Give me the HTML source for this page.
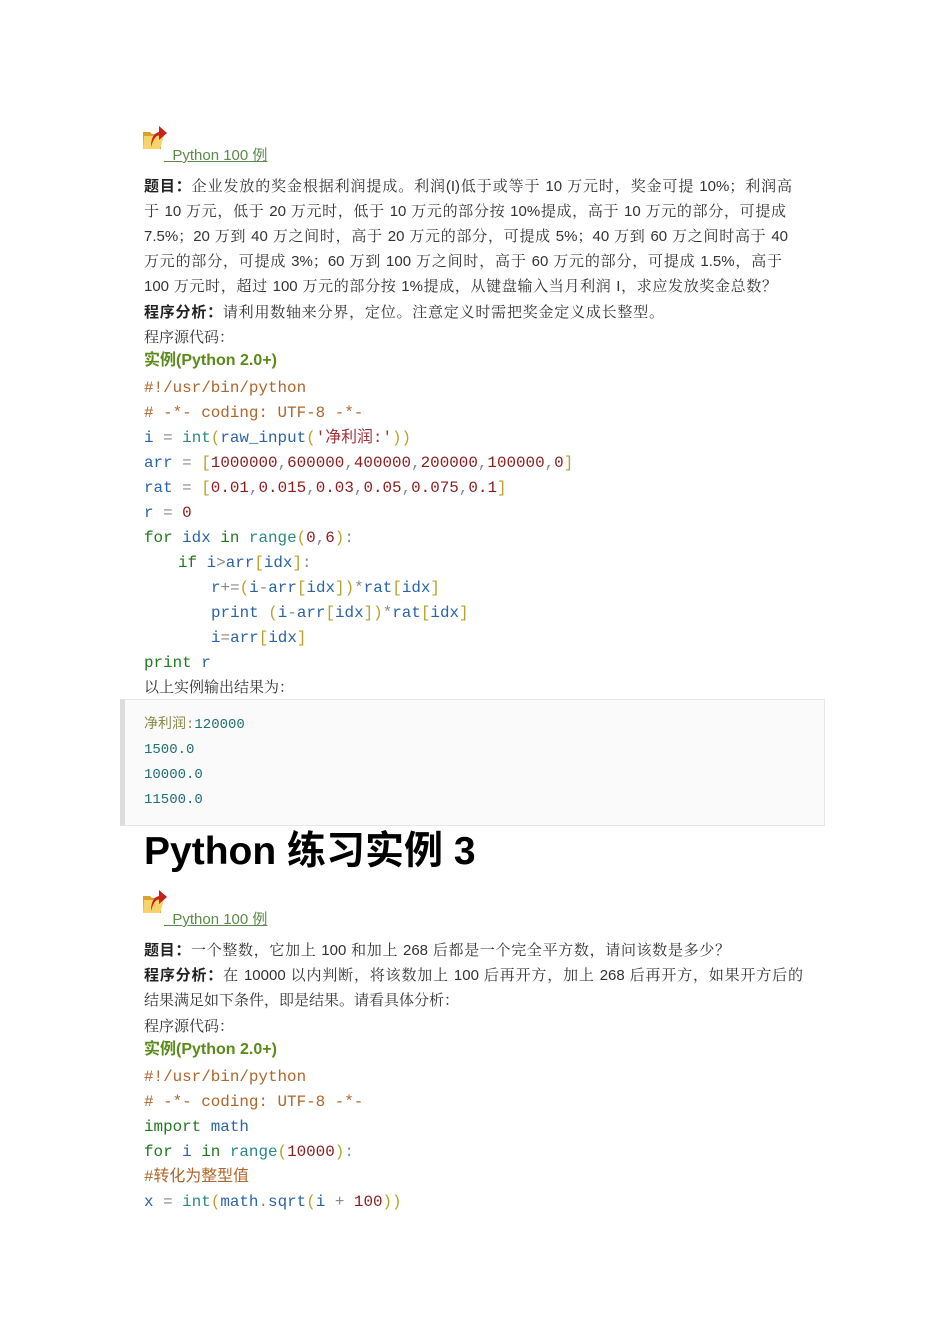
<!DOCTYPE html>
<html><head><meta charset="utf-8"><style>
body{margin:0;width:950px;height:1344px;background:#fff;position:relative;overflow:hidden}
.l{position:absolute;left:144px;white-space:pre;line-height:20px;height:20px}
.t{font-family:"Liberation Sans","Noto Serif CJK SC",serif;font-size:15px;color:#333;margin-top:2px}
.j{white-space:nowrap;text-align:justify;text-align-last:justify;text-justify:inter-character}
.t b{font-family:"Liberation Sans","Noto Sans CJK SC",sans-serif;font-weight:bold;color:#222}
.c{font-family:"Liberation Mono","Noto Sans CJK SC",monospace;font-size:15.9px;color:#2b63a8;margin-top:1px}
.k{color:#1f7a1f}.bi{color:#2a8a80}.br{color:#b8a22a}.n{color:#8b1c1c}.cm{color:#b0652a}.o{color:#888}.s{color:#a0303a}
.h{font-family:"Liberation Sans","Noto Sans CJK SC",sans-serif;font-weight:bold;color:#5a8a1a;font-size:16px;margin-top:1px}
.lk{position:absolute;left:164px;font-family:"Liberation Sans","Noto Sans CJK SC",sans-serif;font-size:15px;color:#5b8a4a;text-decoration:underline;white-space:pre;line-height:20px;margin-top:1px}
.out{font-family:"Liberation Mono","Noto Sans CJK SC",monospace;font-size:14px;color:#1f6f73;margin-top:1px}
</style></head><body>
<svg style="position:absolute;left:142px;top:122px" width="26" height="30" viewBox="0 0 26 30"><path d="M1 10h7l2 2h9v15H1z" fill="#d9a22a"/><path d="M2 14h20l-4 13H1z" fill="#f7d36a"/><path d="M9 25c0-9 3-14 8-15V4l8 7-8 7v-5c-4 1-6 5-8 12z" fill="#c8201a"/></svg>
<div class="lk" style="top:145px">  Python 100 例</div>
<div class="l t j" style="top:175px;width:648px"><b>题目：</b>企业发放的奖金根据利润提成。利润(I)低于或等于 10 万元时，奖金可提 10%；利润高</div>
<div class="l t j" style="top:200px;width:642px">于 10 万元，低于 20 万元时，低于 10 万元的部分按 10%提成，高于 10 万元的部分，可提成</div>
<div class="l t j" style="top:225px;width:644px">7.5%；20 万到 40 万之间时，高于 20 万元的部分，可提成 5%；40 万到 60 万之间时高于 40</div>
<div class="l t j" style="top:250px;width:638px">万元的部分，可提成 3%；60 万到 100 万之间时，高于 60 万元的部分，可提成 1.5%，高于</div>
<div class="l t j" style="top:275px;width:633px">100 万元时，超过 100 万元的部分按 1%提成，从键盘输入当月利润 I，求应发放奖金总数？</div>
<div class="l t j" style="top:301px;width:520px"><b>程序分析：</b>请利用数轴来分界，定位。注意定义时需把奖金定义成长整型。</div>
<div class="l t" style="top:326px">程序源代码：</div>
<div class="l h" style="top:350px">实例(Python 2.0+)</div>
<div class="l c" style="top:377px"><span class="cm">#!/usr/bin/python</span></div>
<div class="l c" style="top:402px"><span class="cm"># -*- coding: UTF-8 -*-</span></div>
<div class="l c" style="top:427px">i <span class="o">=</span> <span class="bi">int</span><span class="br">(</span>raw_input<span class="br">(</span><span class="s">'净利润:'</span><span class="br">))</span></div>
<div class="l c" style="top:452px">arr <span class="o">=</span> <span class="br">[</span><span class="n">1000000</span><span class="o">,</span><span class="n">600000</span><span class="o">,</span><span class="n">400000</span><span class="o">,</span><span class="n">200000</span><span class="o">,</span><span class="n">100000</span><span class="o">,</span><span class="n">0</span><span class="br">]</span></div>
<div class="l c" style="top:477px">rat <span class="o">=</span> <span class="br">[</span><span class="n">0.01</span><span class="o">,</span><span class="n">0.015</span><span class="o">,</span><span class="n">0.03</span><span class="o">,</span><span class="n">0.05</span><span class="o">,</span><span class="n">0.075</span><span class="o">,</span><span class="n">0.1</span><span class="br">]</span></div>
<div class="l c" style="top:502px">r <span class="o">=</span> <span class="n">0</span></div>
<div class="l c" style="top:527px"><span class="k">for</span> idx <span class="k">in</span> <span class="bi">range</span><span class="br">(</span><span class="n">0</span><span class="o">,</span><span class="n">6</span><span class="br">)</span><span class="o">:</span></div>
<div class="l c" style="top:552px;left:178px"><span class="k">if</span> i<span class="o">&gt;</span>arr<span class="br">[</span>idx<span class="br">]</span><span class="o">:</span></div>
<div class="l c" style="top:577px;left:211px">r<span class="o">+=</span><span class="br">(</span>i<span class="o">-</span>arr<span class="br">[</span>idx<span class="br">])</span><span class="o">*</span>rat<span class="br">[</span>idx<span class="br">]</span></div>
<div class="l c" style="top:602px;left:211px">print <span class="br">(</span>i<span class="o">-</span>arr<span class="br">[</span>idx<span class="br">])</span><span class="o">*</span>rat<span class="br">[</span>idx<span class="br">]</span></div>
<div class="l c" style="top:627px;left:211px">i<span class="o">=</span>arr<span class="br">[</span>idx<span class="br">]</span></div>
<div class="l c" style="top:652px"><span class="k">print</span> r</div>
<div class="l t" style="top:676px">以上实例输出结果为：</div>
<div style="position:absolute;left:120px;top:699px;width:705px;height:127px;background:#fafafa;border:1px solid #e6e6e6;border-left:5px solid #dcdcdc;box-sizing:border-box"></div>
<div class="l out" style="top:714px"><span style="color:#8a8a4a">净利润:</span>120000</div>
<div class="l out" style="top:739px">1500.0</div>
<div class="l out" style="top:764px">10000.0</div>
<div class="l out" style="top:789px">11500.0</div>
<div style="position:absolute;left:144px;top:828px;font-family:'Liberation Sans','Noto Sans CJK SC',sans-serif;font-weight:bold;font-size:39px;line-height:48px;color:#000;white-space:pre">Python 练习实例 3</div>
<svg style="position:absolute;left:142px;top:886px" width="26" height="30" viewBox="0 0 26 30"><path d="M1 10h7l2 2h9v15H1z" fill="#d9a22a"/><path d="M2 14h20l-4 13H1z" fill="#f7d36a"/><path d="M9 25c0-9 3-14 8-15V4l8 7-8 7v-5c-4 1-6 5-8 12z" fill="#c8201a"/></svg>
<div class="lk" style="top:909px">  Python 100 例</div>
<div class="l t j" style="top:939px;width:586px"><b>题目：</b>一个整数，它加上 100 和加上 268 后都是一个完全平方数，请问该数是多少？</div>
<div class="l t j" style="top:964px;width:659px"><b>程序分析：</b>在 10000 以内判断，将该数加上 100 后再开方，加上 268 后再开方，如果开方后的</div>
<div class="l t" style="top:989px">结果满足如下条件，即是结果。请看具体分析：</div>
<div class="l t" style="top:1015px">程序源代码：</div>
<div class="l h" style="top:1039px">实例(Python 2.0+)</div>
<div class="l c" style="top:1066px"><span class="cm">#!/usr/bin/python</span></div>
<div class="l c" style="top:1091px"><span class="cm"># -*- coding: UTF-8 -*-</span></div>
<div class="l c" style="top:1116px"><span class="k">import</span> math</div>
<div class="l c" style="top:1141px"><span class="k">for</span> i <span class="k">in</span> <span class="bi">range</span><span class="br">(</span><span class="n">10000</span><span class="br">)</span><span class="o">:</span></div>
<div class="l c" style="top:1166px"><span class="cm">#转化为整型值</span></div>
<div class="l c" style="top:1191px">x <span class="o">=</span> <span class="bi">int</span><span class="br">(</span>math<span class="o">.</span>sqrt<span class="br">(</span>i <span class="o">+</span> <span class="n">100</span><span class="br">))</span></div>
</body></html>
